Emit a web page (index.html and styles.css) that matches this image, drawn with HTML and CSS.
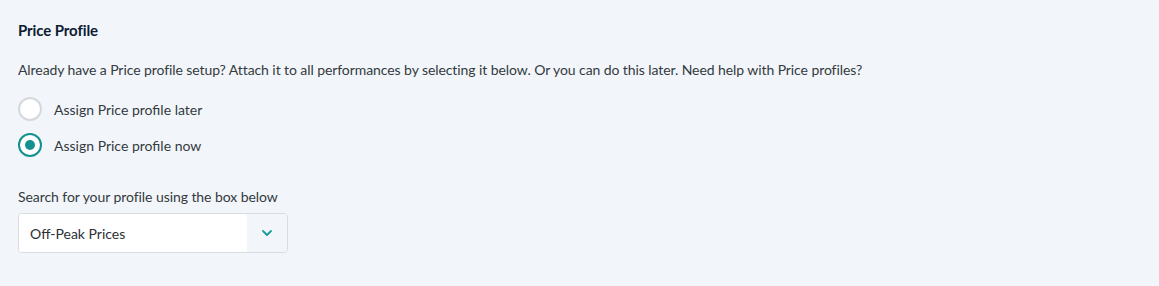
FILE: index.html
```html
<!DOCTYPE html>
<html>
<head>
<meta charset="utf-8">
<link rel="stylesheet" href="styles.css">
</head>
<body>
<section class="panel">
  <h2 class="title">Price Profile</h2>
  <p class="intro">Already have a Price profile setup? Attach it to all performances by selecting it below. Or you can do this later. Need help with Price profiles?</p>
  <div class="radios">
    <label class="radio"><span class="dot"></span><span>Assign Price profile later</span></label>
    <label class="radio checked"><span class="dot"></span><span>Assign Price profile now</span></label>
  </div>
  <div class="search-label">Search for your profile using the box below</div>
  <div class="select">
    <div class="value">Off-Peak Prices</div>
    <div class="toggle">
      <svg width="10" height="6" viewBox="0 0 10 6"><path d="M1 1l4 4 4-4" fill="none" stroke="#1a9a9a" stroke-width="1.8" stroke-linecap="round" stroke-linejoin="round"/></svg>
    </div>
  </div>
</section>
</body>
</html>
```
FILE: styles.css
```css
html, body {
  margin: 0;
  padding: 0;
  background: #f2f6fa;
}
body {
  font-family: Lato, "Open Sans", sans-serif;
  color: #333a40;
  font-size: 14px;
}
.panel {
  padding: 20px 18px;
}
.title {
  margin: 0;
  font-size: 15px;
  font-weight: 700;
  line-height: 20px;
  color: #0d1b33;
  letter-spacing: -0.1px;
}
.intro {
  margin: 20px 0 0;
  line-height: 20px;
  letter-spacing: -0.08px;
}
.radios {
  display: flex;
  flex-direction: column;
  gap: 12px;
  margin-top: 17px;
}
.radio {
  display: flex;
  align-items: center;
  gap: 12px;
  height: 24px;
}
.dot {
  width: 24px;
  height: 24px;
  box-sizing: border-box;
  border: 2px solid #d4d8dc;
  border-radius: 50%;
  background: #fff;
  display: flex;
  align-items: center;
  justify-content: center;
}
.checked .dot {
  border-color: #13918f;
}
.checked .dot::after {
  content: "";
  width: 10px;
  height: 10px;
  border-radius: 50%;
  background: #13918f;
}
.search-label {
  margin-top: 30px;
  line-height: 20px;
  letter-spacing: -0.07px;
}
.select {
  margin-top: 6px;
  width: 270px;
  height: 40px;
  box-sizing: border-box;
  border: 1px solid #d9dde1;
  border-radius: 4px;
  display: flex;
  overflow: hidden;
}
.value {
  flex: 1;
  background: #fff;
  padding: 0 11px;
  display: flex;
  align-items: center;
  color: #2a3036;
}
.toggle {
  width: 40px;
  display: flex;
  align-items: center;
  justify-content: center;
  background: #f2f6fa;
}
```
